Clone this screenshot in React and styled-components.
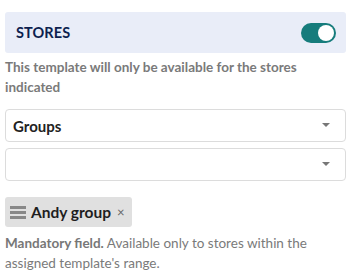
import React from "react";
import styled, { createGlobalStyle } from "styled-components";

const GlobalStyle = createGlobalStyle`
    body {
        margin: 0;
        background: #fff;
        font-family: "Source Sans Pro", "Lato", "Noto Sans", sans-serif;
    }
`;

const App = () => {
    return (
        <Page>
            <GlobalStyle />
            <Header>
                <Title>STORES</Title>
                <Toggle $on />
            </Header>
            <Description>
                This template will only be available for the stores indicated
            </Description>

            <SelectBox>
                <span>Groups</span>
                <Caret />
            </SelectBox>
            <SelectBox>
                <span />
                <Caret />
            </SelectBox>

            <ChipRow>
                <Chip>
                    <Handle>
                        <i /><i /><i />
                    </Handle>
                    <span className="label">Andy group</span>
                    <span className="close">×</span>
                </Chip>
            </ChipRow>

            <Help>
                <b>Mandatory field.</b> Available only to stores within the assigned template's range.
            </Help>
        </Page>
    );
};

export default App;

const Page = styled.div`
    box-sizing: border-box;
    width: 359px;
    padding: 12px 13px 0 5px;
    display: flex;
    flex-direction: column;
`;

const Header = styled.div`
    height: 41px;
    display: flex;
    align-items: center;
    justify-content: space-between;
    padding: 0 10px 0 11px;
    background-color: #e9edf8;
    border-radius: 3px;
`;

const Title = styled.div`
    font-size: 14.5px;
    font-weight: 700;
    color: #0d1f4f;
    letter-spacing: 0.1px;
`;

const Toggle = styled.div`
    position: relative;
    width: 35px;
    height: 20px;
    border-radius: 10px;
    background-color: ${props => (props.$on ? "#167c7c" : "#bbb")};
    &::after {
        content: "";
        position: absolute;
        top: 2px;
        left: ${props => (props.$on ? "17px" : "2px")};
        width: 16px;
        height: 16px;
        border-radius: 50%;
        background: #fff;
    }
`;

const Description = styled.p`
    margin: 4px 0 12px 0;
    font-size: 13.5px;
    line-height: 20px;
    font-weight: 700;
    color: #7a7a7a;
    padding-right: 40px;
`;

const SelectBox = styled.div`
    box-sizing: border-box;
    height: 33px;
    margin-bottom: 6px;
    display: flex;
    align-items: center;
    justify-content: space-between;
    padding: 0 15px 0 7px;
    border: 1px solid #dcdcdc;
    border-radius: 4px;
    font-size: 15px;
    font-weight: 700;
    color: #222;
`;

const Caret = styled.span`
    width: 0;
    height: 0;
    border-left: 4px solid transparent;
    border-right: 4px solid transparent;
    border-top: 4px solid #777;
    margin-top: -2px;
`;

const ChipRow = styled.div`
    display: flex;
    margin-top: 10px;
`;

const Chip = styled.div`
    height: 30px;
    display: flex;
    align-items: center;
    padding: 0 7px 0 5px;
    background-color: #e0e0e0;
    border-radius: 3px;
    .label {
        font-size: 15.5px;
        font-weight: 700;
        color: #1e1e1e;
        margin-left: 5px;
    }
    .close {
        font-size: 13px;
        color: #666;
        margin-left: 6px;
    }
`;

const Handle = styled.span`
    display: flex;
    flex-direction: column;
    gap: 2px;
    width: 16px;
    i {
        display: block;
        height: 3px;
        background: #888;
    }
`;

const Help = styled.p`
    margin: 6px 0 0 0;
    font-size: 13.5px;
    line-height: 20px;
    color: #7a7a7a;
    padding-right: 30px;
    b {
        font-weight: 700;
        color: #777;
    }
`;
